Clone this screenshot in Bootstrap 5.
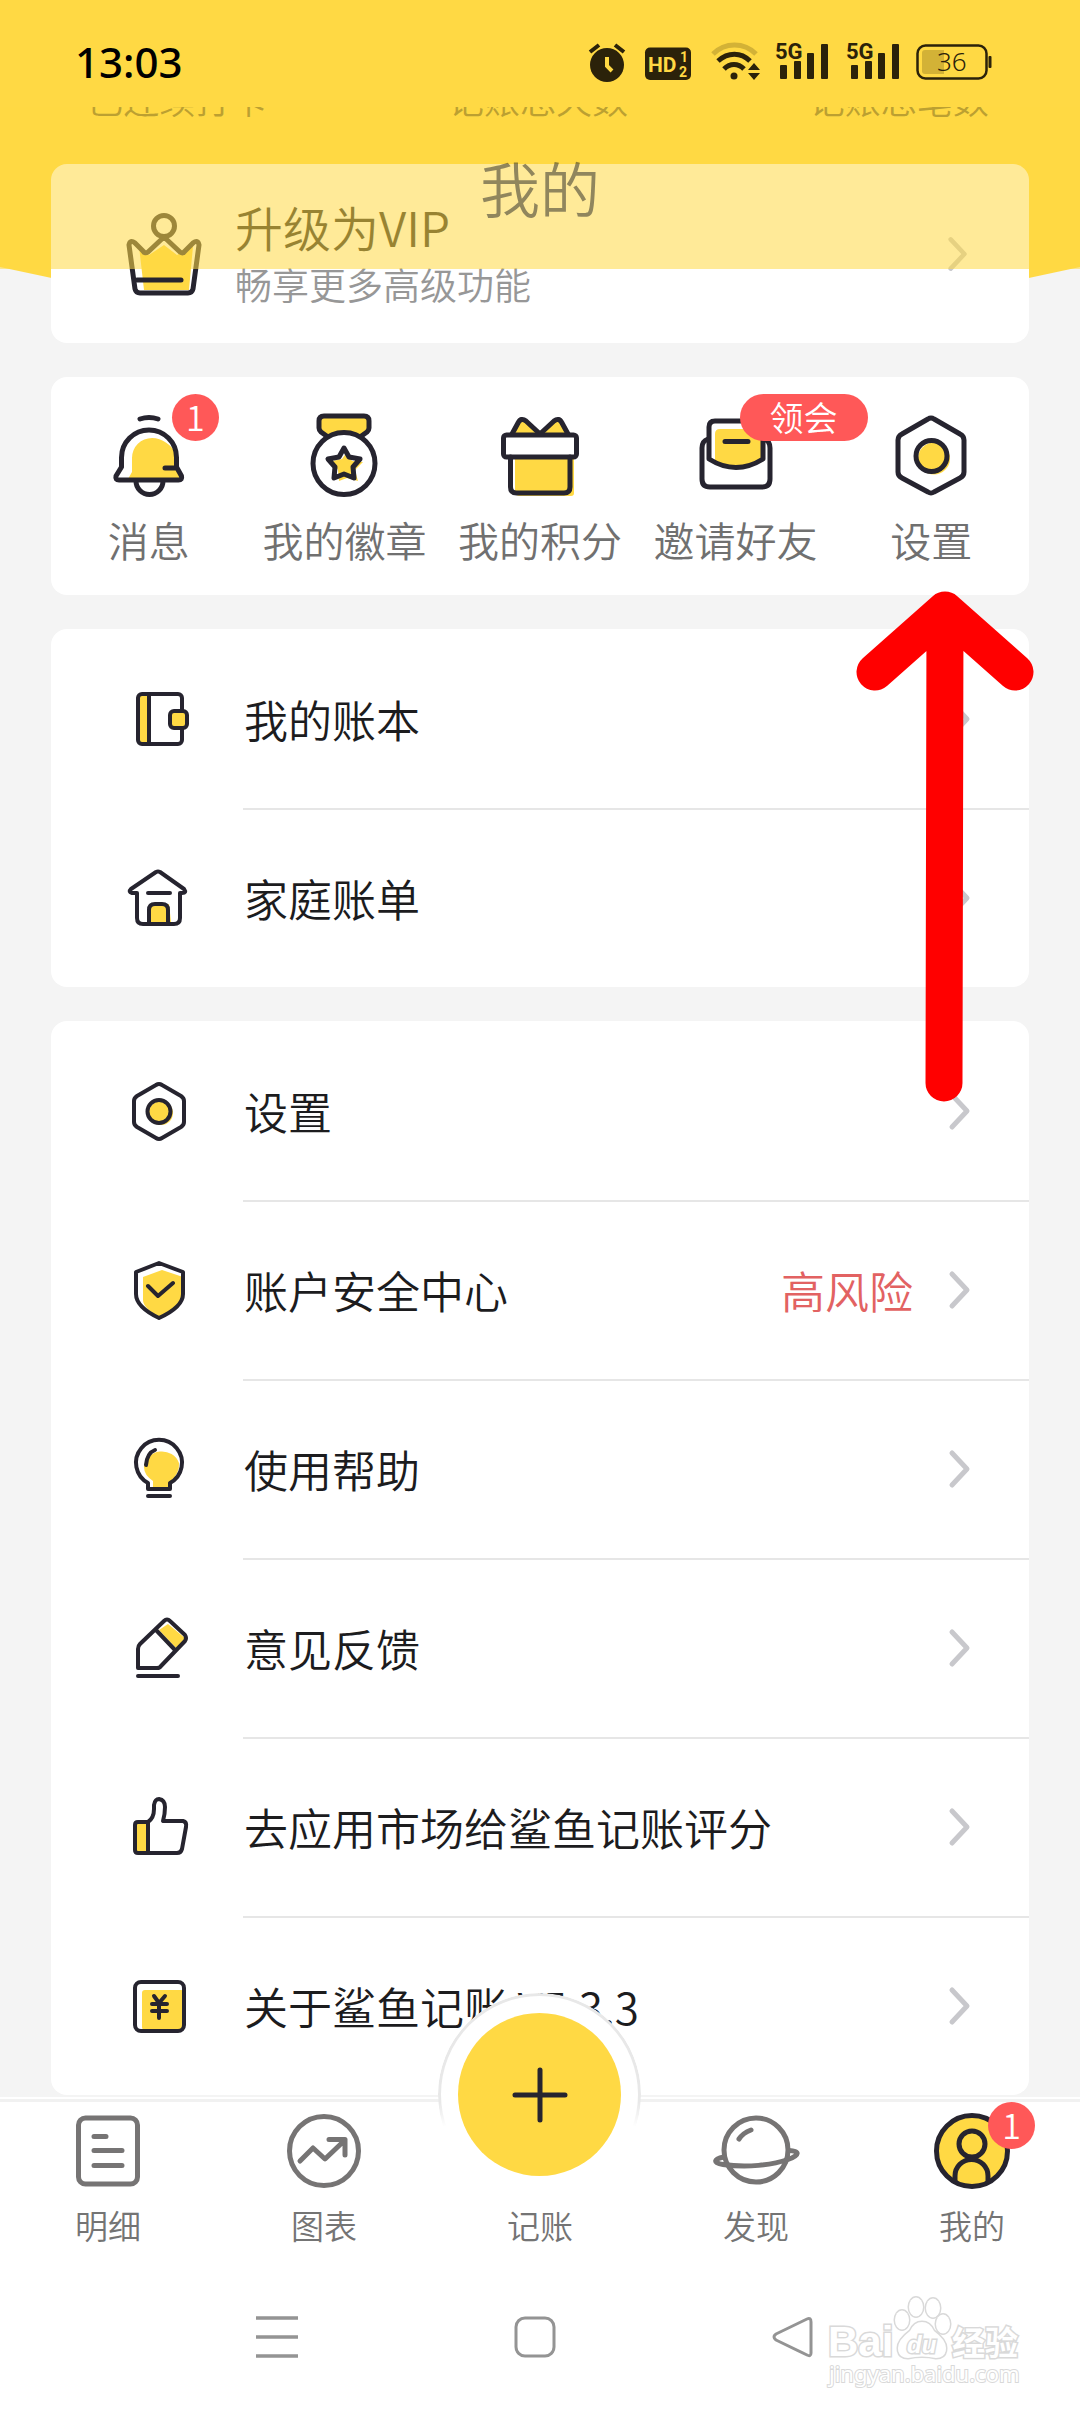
<!DOCTYPE html>
<html lang="zh-CN">
<head>
<meta charset="utf-8">
<meta name="viewport" content="width=device-width, initial-scale=1">
<title>我的</title>
<link href="https://cdn.jsdelivr.net/npm/bootstrap@5.3.0/dist/css/bootstrap.min.css" rel="stylesheet">
<style>
  :root { --sun: #ffd944; --ink: #26242f; --coral: #ff5858; }
  body { background: #f4f4f4; color: #1c1c1e; font-family: "Noto Sans CJK SC", sans-serif; font-weight: 350; font-size: 44px; line-height: 56px; }
  a, a:hover { color: inherit; text-decoration: none; }
  svg { display: block; flex: none; }
  .ico { fill: none; stroke: var(--ink); stroke-width: 5; stroke-linecap: round; stroke-linejoin: round; }
  .ico-row { stroke-width: 4; }
  .ico .sun { fill: var(--sun); stroke: none; }
  .ico .sun-line { fill: var(--sun); }
  .ico .paper { fill: #fff; }
  .hill { height: 290px; background: var(--sun); clip-path: polygon(0 0, 100% 0, 100% 267px, 90% 290px, 10% 290px, 0 267px); z-index: -1; }
  .veil { background: rgba(255, 217, 68, .55); height: 269px; z-index: 20; }
  .status-bar { background: var(--sun); height: 107px; padding: 14px 87px 0 75px; }
  .status-main { height: 96px; }
  .clock { font: 500 42px/60px "Noto Sans", sans-serif; color: #000; }
  .veil-title { font-size: 60px; line-height: 72px; color: #222; opacity: .5; margin: 44px 0 0; font-weight: 350; }
  .page-body { padding: 78px 51px 330px; }
  .stats { font-size: 36px; line-height: 40px; color: #6b5c1c; margin: 0 -50px 46px -54px; }
  .panel { background: #fff; border: 0; border-radius: 16px; margin-bottom: 34px; }
  .vip { height: 179px; padding: 0 60px 0 74px; }
  .vip-title { font-size: 48px; line-height: 56px; }
  .vip-note { font-size: 37px; line-height: 44px; color: #979797; margin-top: 8px; }
  .quick { height: 218px; padding-top: 35px; }
  .quick-label { font-size: 41px; line-height: 48px; color: #707070; margin-top: 15px; }
  .pill { position: absolute; background: var(--coral); color: #fff; height: 47px; line-height: 46px; min-width: 47px; border-radius: 24px; text-align: center; font-size: 34px; z-index: 2; }
  .pill-num { left: 50%; top: -18px; margin-left: 23px; }
  .pill-wide { left: 50%; top: -18px; margin-left: 4px; width: 128px; }
  .menu-row { height: 179px; padding-left: 76px; }
  .menu-text { margin-left: 52px; padding: 0 57px 2px 1px; border-top: 2px solid transparent; }
  .menu-row + .menu-row .menu-text { border-top-color: #e6e6e6; }
  .risk { color: #e26262; margin-right: 35px; }
  .dock { background: #fff; border-top: 2px solid #fff; z-index: 10; }
  .dock-tabs { border-top: 3px solid #f1f1f1; height: 192px; }
  .tab-label { font-size: 33px; line-height: 40px; color: #747474; margin-top: 14px; }
  .tab-item { padding-top: 9px; position: relative; }
  .fab { position: absolute; left: 50%; top: -109px; width: 203px; height: 203px; margin-left: -102px; padding: 0; border: 0; background: none; z-index: 3; }
  .fab-ring { position: absolute; inset: 0; border-radius: 50%; background: #fff; border: 3px solid #e8e8e8; -webkit-mask-image: linear-gradient(#000 54%, transparent 66%); mask-image: linear-gradient(#000 54%, transparent 66%); }
  .fab-disc { position: absolute; inset: 20px; border-radius: 50%; background: var(--sun); }
  .fab-space { height: 80px; }
  .sys-nav { height: 121px; padding-left: 148px; }
  .sys-key { width: 258px; height: 92px; padding: 0; border: 0; background: none; }
  .tip-arrow { left: 50%; margin-left: 314px; top: 588px; z-index: 30; }
  .stamp { right: 46px; bottom: 16px; }
</style>
<script src="https://cdn.jsdelivr.net/npm/bootstrap@5.3.0/dist/js/bootstrap.bundle.min.js"></script>
</head>
<body class="position-relative">
<svg width="0" height="0" class="position-absolute" aria-hidden="true">
  <symbol id="chev" viewBox="0 0 24 40"><path d="M4 4 19 20 4 36" fill="none" stroke="#c8c8cc" stroke-width="5" stroke-linecap="round" stroke-linejoin="round"/></symbol>
</svg>

<div class="hill position-absolute top-0 start-0 w-100"></div>

<header class="veil fixed-top">
  <div class="status-bar">
    <div class="status-main d-flex justify-content-between align-items-center">
    <span class="clock">13:03</span>
    <svg width="406" height="48" viewBox="587 38 406 48" fill="#2b220a" aria-label="状态">
      <circle cx="607" cy="65" r="17"/>
      <path d="m590 52 9-7M624 52l-9-7" stroke="#2b220a" stroke-width="4"/>
      <path d="M607 57v9l5 5" fill="none" stroke="#ffd944" stroke-width="4"/>
      <rect x="645" y="47.500" width="46" height="32.500" rx="5"/>
      <g fill="#ffd944" font-family="Roboto, sans-serif" font-weight="700"><text x="648" y="72" font-size="21">HD</text><text x="680" y="62" font-size="14">1</text><text x="679" y="77" font-size="14">2</text></g>
      <g fill="none" stroke="#2b220a" stroke-width="5">
        <path d="M713 54c12-12 31-12 43 0" stroke="#d3b236"/>
        <path d="M718 61c10-9 23-9 32 0M724 69c6-6 14-6 20 0"/>
      </g>
      <circle cx="734" cy="76" r="3.500"/>
      <path d="m754 63 6 7h-12zM754 80l6-7h-12z"/>
      <g id="sig">
        <text x="775" y="59" font-family="Roboto, sans-serif" font-weight="700" font-size="22">5G</text>
        <rect x="780" y="65" width="7" height="14" rx="1"/><rect x="794" y="61" width="7" height="18" rx="1"/><rect x="807" y="53" width="7" height="26" rx="1"/><rect x="821" y="44" width="7" height="35" rx="1"/>
      </g>
      <use href="#sig" x="71"/>
      <rect x="917.500" y="45.500" width="69" height="33" rx="8" fill="none" stroke="#2b220a" stroke-width="2.500"/>
      <path d="M925 50h19v24h-19q-3 0-3-3V53q0-3 3-3z" fill="#d3b236"/>
      <rect x="988.500" y="56" width="3" height="12" rx="1"/>
      <text x="937" y="71" font-family="Noto Sans, sans-serif" font-size="26">36</text>
    </svg>
    </div>
  </div>
  <h1 class="veil-title text-center">我的</h1>
</header>

<main class="page-body">
  <div class="stats row g-0 text-center">
    <div class="col-4">已连续打卡</div>
    <div class="col-4">记账总天数</div>
    <div class="col-4">记账总笔数</div>
  </div>

  <a href="#" class="panel vip d-flex align-items-center">
    <svg class="ico" width="78" height="84" viewBox="0 0 78 84">
      <path class="sun" d="M14 34 24 43 39 33 52 43 68 34 64 78H19z"/>
      <circle cx="39" cy="14" r="10.500"/>
      <path d="M39 25 23 40q-3 2-5-1L10 31q-5-4-6 2l6 44q1 4 5 4h48q4 0 5-4l6-44q-1-6-6-2l-8 8q-2 3-5 1z"/>
      <path d="M12 68H56"/>
    </svg>
    <span class="flex-grow-1 ms-4 ps-2 pb-1">
      <span class="vip-title d-block">升级为VIP</span>
      <span class="vip-note d-block">畅享更多高级功能</span>
    </span>
    <svg width="22" height="40"><use href="#chev"/></svg>
  </a>

  <nav class="panel quick row row-cols-5 g-0 text-center">
    <a href="#" class="col">
      <span class="position-relative d-block"><svg class="ico mx-auto" width="80" height="88" viewBox="0 0 80 88">
        <path class="sun" d="M19 67 23 60V46a20 20 0 0 1 20-20c10 0 20 7 24 16v13l5 12z"/>
        <path d="M31 7q9-3 18 0"/>
        <path d="M12.500 55V45.500a27.500 27.500 0 0 1 55 0V55l5 9q1 4-3 4H10q-4 0-3-4zM27 69a13.500 13.500 0 0 0 27 0M56 56H67"/>
      </svg><span class="pill pill-num">1</span></span>
      <span class="quick-label d-block">消息</span>
    </a>
    <a href="#" class="col">
      <svg class="ico mx-auto" width="80" height="88" viewBox="0 0 80 88">
        <path class="sun-line" d="M24 25 17 20q-2-2-2-4V9q0-5 5-5h40q5 0 5 5v7q0 2-2 4l-7 5"/>
        <circle class="paper" cx="40" cy="51.500" r="31"/>
        <path class="sun" d="m43 40 5 9 11 1-8 8 3 11-11-3-8 3-1-11-6-9 10-2z"/>
        <path d="M40 36 45 45 56 47 49 55 50 66 40 62 30 66 31 55 24 47 35 45z"/>
      </svg>
      <span class="quick-label d-block">我的徽章</span>
    </a>
    <a href="#" class="col">
      <svg class="ico mx-auto" width="80" height="88" viewBox="0 0 80 88">
        <path class="sun" d="M15 45H74V81q0 3-3 3H20q-5 0-5-5z"/>
        <path class="sun-line" d="M12 22 18 11q3-6 8-2L40 22 54 9q5-4 8 2l6 11"/>
        <rect class="paper" x="3.500" y="23" width="73" height="22" rx="3"/>
        <path d="M10.500 45V75q0 6 6 6H64q6 0 6-6V45"/>
      </svg>
      <span class="quick-label d-block">我的积分</span>
    </a>
    <a href="#" class="col">
      <span class="position-relative d-block"><svg class="ico mx-auto" width="80" height="88" viewBox="0 0 80 88">
        <path d="M12 27q-6 2-6 9v31q0 8 8 8H66q8 0 8-8V36q0-7-6-9"/>
        <path class="sun" d="M19 22q0-5 5-5H66V47Q42 63 19 52z"/>
        <path d="M13 47V15q0-6 6-6H61q6 0 6 6V47Q40 64 13 47zM29 29.500H52"/>
      </svg><span class="pill pill-wide">领会</span></span>
      <span class="quick-label d-block">邀请好友</span>
    </a>
    <a href="#" class="col">
      <svg class="ico mx-auto" width="80" height="88" viewBox="0 0 80 88">
        <path d="M37 7q3-2 6 0L69 22q4 2 4 6V60q0 4-4 6L43 80q-3 2-6 0L11 66q-4-2-4-6V28q0-4 4-6z"/>
        <circle class="sun" cx="43" cy="46.500" r="16"/><circle cx="40.500" cy="44" r="15.500"/>
      </svg>
      <span class="quick-label d-block">设置</span>
    </a>
  </nav>

  <nav class="panel">
    <a href="#" class="menu-row d-flex align-items-center">
      <svg class="ico ico-row" width="64" height="64" viewBox="0 0 64 64">
        <path class="sun" d="M12 8H22V56H12z"/>
        <rect x="11" y="7" width="44" height="50" rx="4"/><path d="M22 7V57"/>
        <rect class="sun-line" x="43" y="24" width="17" height="17" rx="4"/>
      </svg>
      <span class="menu-text flex-grow-1 align-self-stretch d-flex align-items-center"><span class="flex-grow-1">我的账本</span><svg width="24" height="40"><use href="#chev"/></svg></span>
    </a>
    <a href="#" class="menu-row d-flex align-items-center">
      <svg class="ico ico-row" width="64" height="64" viewBox="0 0 64 64">
        <path class="sun" d="M22 38H42l2 18H22z"/>
        <path d="M29 6q2-1 4 0L57 23q3 4-2 4H53V52q0 6-6 6H16q-6 0-6-6V27H5q-4-1-1-4zM21 27H43M22 57V44q0-6 6-6h7q6 0 6 6V57"/>
      </svg>
      <span class="menu-text flex-grow-1 align-self-stretch d-flex align-items-center"><span class="flex-grow-1">家庭账单</span><svg width="24" height="40"><use href="#chev"/></svg></span>
    </a>
  </nav>

  <nav class="panel">
    <a href="#" class="menu-row d-flex align-items-center">
      <svg class="ico ico-row" width="64" height="64" viewBox="0 0 64 64">
        <path d="M29 6q3-2 6 0L54 17q3 2 3 5V43q0 3-3 5L35 59q-3 2-6 0L10 48q-3-2-3-5V22q0-3 3-5z"/>
        <circle class="sun" cx="34" cy="34" r="12"/><circle cx="32" cy="32.500" r="11.500"/>
      </svg>
      <span class="menu-text flex-grow-1 align-self-stretch d-flex align-items-center"><span class="flex-grow-1">设置</span><svg width="24" height="40"><use href="#chev"/></svg></span>
    </a>
    <a href="#" class="menu-row d-flex align-items-center">
      <svg class="ico ico-row" width="64" height="64" viewBox="0 0 64 64">
        <path class="sun" d="M16 19 35 12 56 19V38Q54 48 32 59 16 50 16 42z"/>
        <path d="M32 5 9 14V36Q9 49 32 60 56 49 56 36V14zM21 28 31 38 46 25"/>
      </svg>
      <span class="menu-text flex-grow-1 align-self-stretch d-flex align-items-center"><span class="flex-grow-1">账户安全中心</span><span class="risk">高风险</span><svg width="24" height="40"><use href="#chev"/></svg></span>
    </a>
    <a href="#" class="menu-row d-flex align-items-center">
      <svg class="ico ico-row" width="64" height="64" viewBox="0 0 64 64">
        <path class="sun" d="M26 50V44Q17 38 17 30A18 17 0 0 1 52 26Q53 36 43 45V50z"/>
        <path d="M21 52V46A23 23 0 1 1 43 46V52zM21 59H43M19 28q1-12 9-15"/>
      </svg>
      <span class="menu-text flex-grow-1 align-self-stretch d-flex align-items-center"><span class="flex-grow-1">使用帮助</span><svg width="24" height="40"><use href="#chev"/></svg></span>
    </a>
    <a href="#" class="menu-row d-flex align-items-center">
      <svg class="ico ico-row" width="64" height="64" viewBox="0 0 64 64">
        <path class="sun" d="M41 8 58 22 50 33 32 14z"/>
        <path d="M37 5q3-3 6 0L58 19q2 3 0 6L34 50q-1 2-4 2H11V33q0-3 2-5zM29 14 48 34M11 60H51"/>
      </svg>
      <span class="menu-text flex-grow-1 align-self-stretch d-flex align-items-center"><span class="flex-grow-1">意见反馈</span><svg width="24" height="40"><use href="#chev"/></svg></span>
    </a>
    <a href="#" class="menu-row d-flex align-items-center">
      <svg class="ico ico-row" width="64" height="64" viewBox="0 0 64 64">
        <path class="sun" d="M10 29H23V57H10z"/>
        <path d="M21 27Q27 23 27 14V10Q28 4 32 4 38 5 38 12 38 19 36 26H56Q60 27 59 32L55 54Q54 58 50 58H11Q8 58 8 55V30Q8 27 11 27zM21 27V58"/>
      </svg>
      <span class="menu-text flex-grow-1 align-self-stretch d-flex align-items-center"><span class="flex-grow-1">去应用市场给鲨鱼记账评分</span><svg width="24" height="40"><use href="#chev"/></svg></span>
    </a>
    <a href="#" class="menu-row d-flex align-items-center">
      <svg class="ico ico-row" width="64" height="64" viewBox="0 0 64 64">
        <rect class="sun" x="15" y="16" width="42" height="40" rx="3"/>
        <rect x="8" y="8" width="49" height="49" rx="6"/><path d="M27 22 32 29 38 22M25 30H40M25 37H40M32 30V44"/>
      </svg>
      <span class="menu-text flex-grow-1 align-self-stretch d-flex align-items-center"><span class="flex-grow-1">关于鲨鱼记账 V5.3.3</span><svg width="24" height="40"><use href="#chev"/></svg></span>
    </a>
  </nav>
</main>

<svg class="tip-arrow position-absolute" width="184" height="518" viewBox="854 588 184 518" fill="none" stroke="#f00" stroke-width="37" stroke-linecap="round" stroke-linejoin="round"><path d="M875 672 945 610 1015 672M945 612 944 1083"/></svg>

<footer class="dock fixed-bottom">
  <nav class="dock-tabs row row-cols-5 g-0 text-center position-relative">
    <a href="#" class="col tab-item">
      <svg class="mx-auto" width="88" height="80" viewBox="0 0 88 80" fill="none" stroke="#767474" stroke-width="5" stroke-linecap="round"><rect x="14.500" y="7" width="59" height="66" rx="7"/><path d="M30 25.500H42M30 39.500H58M30 54.500H58"/></svg>
      <span class="tab-label d-block">明细</span>
    </a>
    <a href="#" class="col tab-item">
      <svg class="mx-auto" width="88" height="80" viewBox="0 0 88 80" fill="none" stroke="#767474" stroke-width="5" stroke-linecap="round" stroke-linejoin="round"><circle cx="44" cy="40" r="34.500"/><path d="M20 50 33 37 45 48 65 29M49 28.500H65V44"/></svg>
      <span class="tab-label d-block">图表</span>
    </a>
    <a href="#" class="col tab-item">
      <span class="fab-space d-block"></span>
      <span class="tab-label d-block">记账</span>
    </a>
    <a href="#" class="col tab-item">
      <svg class="mx-auto" width="88" height="80" viewBox="0 0 88 80" fill="none" stroke="#767474" stroke-width="5" stroke-linecap="round"><circle cx="44" cy="39" r="32"/><path d="M12 46C1 48 1 52 11 53.500 35 57 60 54 76 48.500 88 44 88 40 77 39.500M27 28q4-6 12-9"/></svg>
      <span class="tab-label d-block">发现</span>
    </a>
    <a href="#" class="col tab-item">
      <svg class="ico mx-auto" width="88" height="80" viewBox="0 0 88 80"><circle class="sun-line" cx="44" cy="40" r="35.500"/><circle cx="44" cy="33" r="13"/><path d="M27 70V65a16.500 16.500 0 0 1 33 0V70"/></svg>
      <span class="pill start-50 ms-3 top-0">1</span>
      <span class="tab-label d-block">我的</span>
    </a>
    <button class="fab" type="button" aria-label="记账"><span class="fab-ring"></span><span class="fab-disc d-flex align-items-center justify-content-center"><svg class="ico" width="60" height="60" viewBox="0 0 60 60"><path d="M5 30H55M30 5V55"/></svg></span></button>
  </nav>
  <div class="sys-nav d-flex align-items-start">
    <button class="sys-key d-flex align-items-center justify-content-center" type="button" aria-label="菜单"><svg width="44" height="44" viewBox="0 0 44 44" stroke="#949494" stroke-width="3.500"><path d="M1 3H43M1 22H43M1 41H43"/></svg></button>
    <button class="sys-key d-flex align-items-center justify-content-center" type="button" aria-label="主页"><svg width="44" height="44" viewBox="0 0 44 44" fill="none" stroke="#949494" stroke-width="3"><rect x="3" y="3" width="38" height="38" rx="9"/></svg></button>
    <button class="sys-key d-flex align-items-center justify-content-center" type="button" aria-label="返回"><svg width="44" height="44" viewBox="0 0 44 44" fill="none" stroke="#949494" stroke-width="3" stroke-linejoin="round"><path d="M36 4Q40 2 40 7V38Q40 42 36 40L5 25Q1 22 5 19z"/></svg></button>
  </div>
  <svg class="stamp position-absolute" width="210" height="104" viewBox="824 2292 210 104" fill="#fff" stroke="#d9d9d9" stroke-width="3" paint-order="stroke">
    <text x="828" y="2356" font-family="Liberation Sans, sans-serif" font-weight="700" font-size="42">Bai</text>
    <ellipse cx="902" cy="2320" rx="7" ry="9.500"/><ellipse cx="916" cy="2307" rx="7" ry="9.500"/><ellipse cx="933" cy="2308" rx="7" ry="9.500"/><ellipse cx="943" cy="2324" rx="7" ry="9.500"/>
    <path d="M922 2322q8 0 12 9 12 9 12 17 0 10-10 10-14-3-28 0-10 0-10-10 0-8 12-17 4-9 12-9z"/>
    <text x="907" y="2353" font-family="Liberation Sans, sans-serif" font-weight="700" font-style="italic" font-size="24">du</text>
    <text x="952" y="2355" font-family="Noto Sans CJK SC, sans-serif" font-weight="700" font-size="33">经验</text>
    <text x="829" y="2382" font-family="Noto Sans, sans-serif" font-weight="400" font-size="22" stroke-width="2">jingyan.baidu.com</text>
  </svg>
</footer>
</body>
</html>
